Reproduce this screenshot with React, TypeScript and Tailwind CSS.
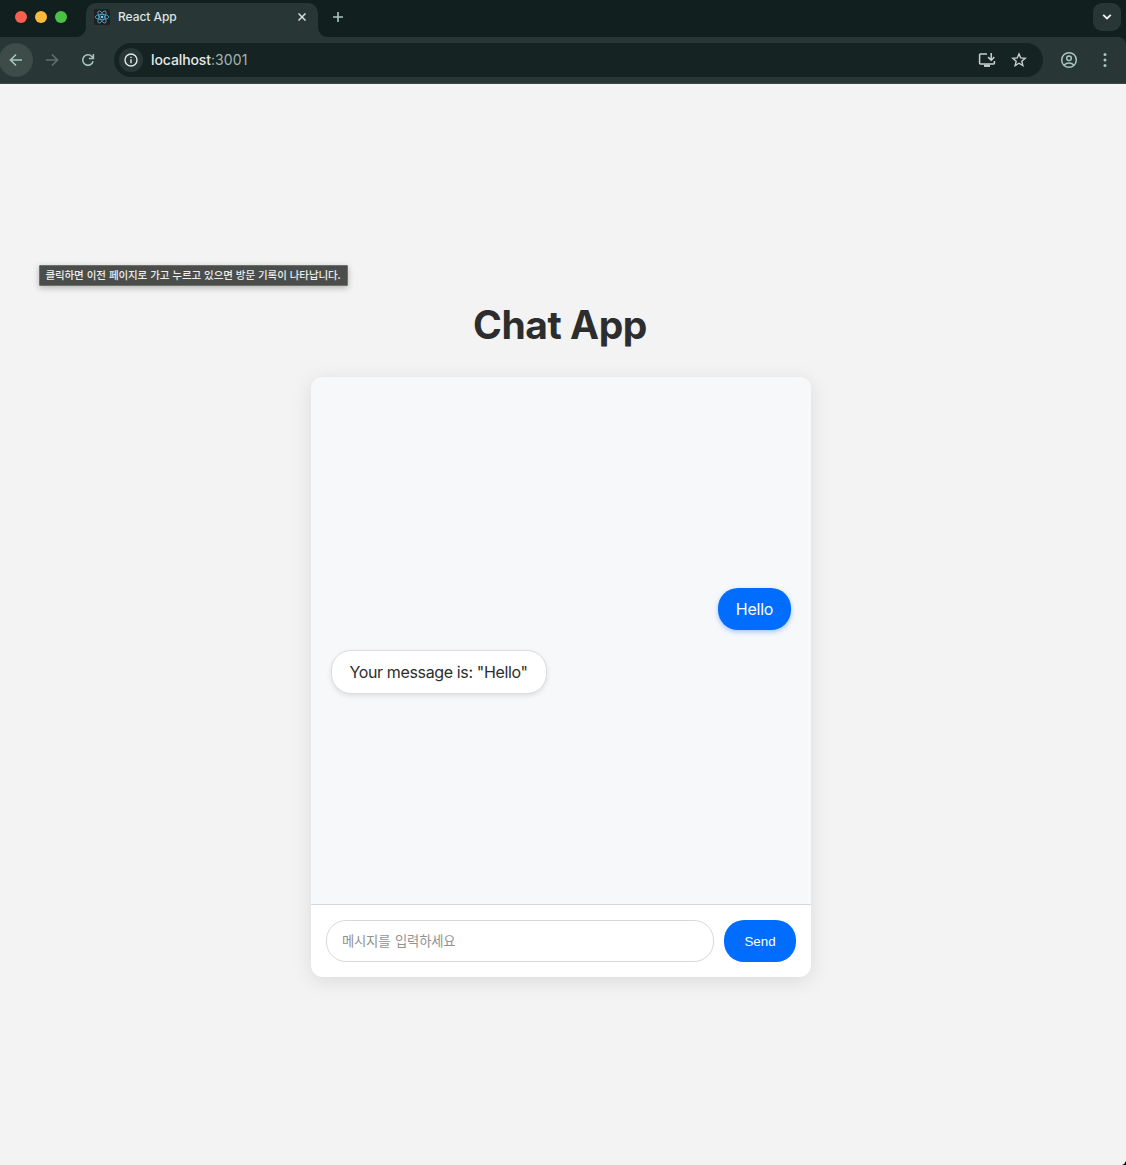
import React from "react";

function ReactLogo() {
  return (
    <svg width="16" height="16" viewBox="0 0 16 16" className="shrink-0">
      <rect width="16" height="16" rx="1.5" fill="#202023" />
      <g fill="none" stroke="#53a9c8" strokeWidth="0.8">
        <ellipse cx="8" cy="8" rx="6.8" ry="2.6" />
        <ellipse cx="8" cy="8" rx="6.8" ry="2.6" transform="rotate(60 8 8)" />
        <ellipse cx="8" cy="8" rx="6.8" ry="2.6" transform="rotate(120 8 8)" />
      </g>
      <circle cx="8" cy="8" r="1.3" fill="#61dafb" />
    </svg>
  );
}

function ArrowIcon({ forward = false }: { forward?: boolean }) {
  return (
    <svg width="14" height="14" viewBox="0 0 14 14" fill="none" stroke="currentColor" strokeWidth="1.6" className={forward ? "rotate-180" : ""}>
      <path d="M13 7H2M7 1.5 1.5 7 7 12.5" />
    </svg>
  );
}

function TabStrip() {
  return (
    <div className="flex h-[37px] bg-[#11201f]">
      <div className="flex h-[34px] w-[76px] items-center gap-2 pl-[15px]">
        <span className="size-3 rounded-full bg-[#f7604f]" />
        <span className="size-3 rounded-full bg-[#fbb93d]" />
        <span className="size-3 rounded-full bg-[#4bc146]" />
      </div>
      <svg width="10" height="10" className="self-end" fill="#283735">
        <path d="M10 0v10H0C5.5 10 10 5.5 10 0Z" />
      </svg>
      <div className="mt-[3px] flex h-[34px] w-[232px] items-center rounded-t-[10px] bg-[#283735] pb-[6px] pl-2">
        <ReactLogo />
        <span className="ml-2 text-[12px] leading-4 font-medium tracking-[-0.05px] text-[#dfe5e3]">React App</span>
        <svg width="8" height="8" viewBox="0 0 8 8" stroke="#d9dfdd" strokeWidth="1.5" className="mr-3 ml-auto">
          <path d="m.5.5 7 7m0-7-7 7" />
        </svg>
      </div>
      <svg width="10" height="10" className="self-end" fill="#283735">
        <path d="M0 0v10h10C4.500 10 0 5.500 0 0Z" />
      </svg>
      <svg width="10" height="10" viewBox="0 0 10 10" stroke="#a9c5bf" strokeWidth="1.6" className="mt-3 ml-[5px]">
        <path d="M5 0v10M0 5h10" />
      </svg>
      <div className="mt-[3px] mr-[5px] ml-auto flex size-7 items-center justify-center rounded-[9px] bg-[#283735]">
        <svg width="10" height="6" viewBox="0 0 10 6" fill="none" stroke="#eef3f1" strokeWidth="1.8">
          <path d="m1.200 .8 3.800 3.700L8.800.8" />
        </svg>
      </div>
    </div>
  );
}

function Toolbar() {
  return (
    <div className="flex h-[47px] items-center rounded-tr-[8px] border-b border-[#3a4745] bg-[#283735] text-[#a9c5bf]">
      <div className="-ml-px flex size-[34px] items-center justify-center rounded-full bg-[#3d4b49]">
        <ArrowIcon />
      </div>
      <div className="ml-3 text-[#5f706d]">
        <ArrowIcon forward />
      </div>
      <svg width="14" height="14" viewBox="0 0 14 14" fill="none" stroke="currentColor" strokeWidth="1.5" className="ml-[22px]">
        <path d="M12.100 8.300A5.250 5.250 0 1 1 10.800 3.400L12.500 5.100" />
        <path d="M12.400 1v4.500H7.900" />
      </svg>
      <div className="ml-[19px] flex h-[34px] w-[929px] items-center rounded-full bg-[#152423] pr-4 pl-[5px] text-[#c8cfcd]">
        <div className="flex size-6 items-center justify-center rounded-full bg-[#283735]">
          <svg width="14" height="14" viewBox="0 0 14 14" fill="none" stroke="#e3e8e6" strokeWidth="1.4">
            <circle cx="7" cy="7" r="6" />
            <path d="M7 6.200v4M7 3.700v1.400" />
          </svg>
        </div>
        <p className="ml-2 text-[14px] leading-5 tracking-[0.08px] text-[#a9b2af]">
          <span className="font-medium tracking-[-0.1px] text-[#e3e8e6]">localhost</span>:3001
        </p>
        <svg width="18" height="16" viewBox="0 0 18 16" fill="none" stroke="currentColor" strokeWidth="1.5" className="ml-auto">
          <path d="M9 2H2.300q-.7 0-.7.7v8.600q0 .7.7.7h13.400q.7 0 .7-.7V9" />
          <path d="M13.200 1v7M10.100 5.100l3.100 3.100 3.100-3.100" />
          <path d="M6 13.800h6" strokeWidth="2.200" />
        </svg>
        <svg width="16" height="16" viewBox="0 0 16 16" fill="none" stroke="currentColor" strokeWidth="1.4" className="ml-[15px]">
          <path d="m8 1.900 1.750 4.050 4.450.4-3.400 2.900 1.050 4.300L8 11.250l-3.850 2.300 1.050-4.300-3.400-2.900 4.450-.4Z" />
        </svg>
      </div>
      <svg width="18" height="18" viewBox="0 0 18 18" fill="none" stroke="currentColor" strokeWidth="1.5" className="ml-[17px]">
        <circle cx="9" cy="9" r="7.300" />
        <circle cx="9" cy="7.300" r="2.300" />
        <path d="M4 14.200c2.700-3 7.300-3 10 0" />
      </svg>
      <svg width="4" height="16" viewBox="0 0 4 16" fill="currentColor" className="ml-[25px]">
        <circle cx="2" cy="2.500" r="1.500" />
        <circle cx="2" cy="8" r="1.500" />
        <circle cx="2" cy="13.500" r="1.500" />
      </svg>
    </div>
  );
}

function ChatCard() {
  return (
    <section className="flex h-[600px] w-[500px] flex-col overflow-hidden rounded-[12px] bg-white shadow-[0_4px_20px_rgba(0,0,0,0.1)]">
      <div className="flex flex-1 flex-col justify-center gap-5 border-b border-[#d6d7d9] bg-[#f7f8fa] px-5 text-[16px] leading-6">
        <div className="flex h-[42px] w-[73px] items-center justify-center self-end rounded-[20px] bg-[#006dff] tracking-[-0.25px] text-white shadow-[0_2px_5px_rgba(0,109,255,0.35)]">
          Hello
        </div>
        <div className="flex h-11 w-[216px] items-center justify-center self-start rounded-[20px] border border-[#dcdde0] bg-white pr-px tracking-[-0.36px] whitespace-nowrap text-[#2d2d2d] shadow-[0_2px_5px_rgba(0,0,0,0.1)]">
          Your message is: "Hello"
        </div>
      </div>
      <form className="flex h-[72px] items-center gap-2.5 px-[15px]" onSubmit={(e) => e.preventDefault()}>
        <input
          className="h-[42px] w-[388px] rounded-[20px] border border-[#d8d8d8] bg-white px-[15px] pb-0.5 font-['Noto_Sans_CJK_KR',sans-serif] text-[13.33px] tracking-[-0.2px] [word-spacing:2px] outline-none placeholder:text-[#929292]"
          placeholder="메시지를 입력하세요"
        />
        <button className="h-[42px] w-[72px] rounded-[20px] bg-[#006dff] pt-px font-['Liberation_Sans',sans-serif] text-[13.33px] text-white">
          Send
        </button>
      </form>
    </section>
  );
}

export default function App() {
  return (
    <div className="relative flex h-[1165px] w-[1126px] flex-col overflow-hidden bg-[#f3f3f3] font-['Inter',sans-serif]">
      <header className="bg-[#11201f]">
        <TabStrip />
        <Toolbar />
      </header>
      <main className="flex flex-1 flex-col items-center pt-[217px] pr-1">
        <h1 className="h-[76px] pr-0.5 text-[39px] leading-[47px] font-bold tracking-[-0.45px] text-[#2d2d2d]">Chat App</h1>
        <ChatCard />
      </main>
      <div
        role="tooltip"
        className="absolute top-[265px] left-[39px] flex h-[21px] w-[309px] items-center justify-center rounded-[1px] border border-[#6e706e] bg-[#4b4d4a] pr-px pb-px font-['Noto_Sans_CJK_KR',sans-serif] text-[10.5px] leading-4 font-medium tracking-[-0.1px] whitespace-nowrap text-[#eeeeee] shadow-[0_2px_6px_rgba(0,0,0,0.25)] [word-spacing:0.8px]"
      >
        클릭하면 이전 페이지로 가고 누르고 있으면 방문 기록이 나타납니다.
      </div>
      <svg width="4" height="4" className="absolute right-0 bottom-0">
        <path d="M4 0v4H0Q3 3 4 0Z" fill="#000" />
      </svg>
    </div>
  );
}
